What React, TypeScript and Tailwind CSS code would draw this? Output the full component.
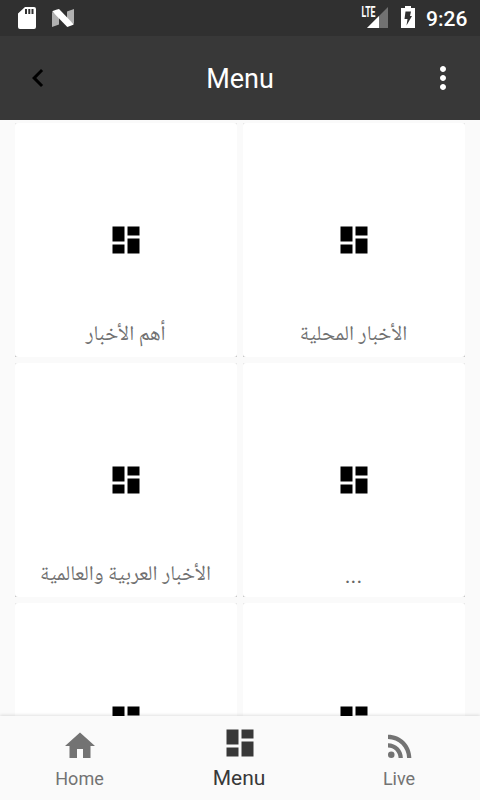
import React from "react";

const DASHBOARD = "M3 13h8V3H3v10zm0 8h8v-6H3v6zm10 0h8V11h-8v10zm0-18v6h8V3h-8z";

function Icon({ d, className }: { d: string; className?: string }) {
  return (
    <svg viewBox="0 0 24 24" width="36" height="36" fill="currentColor" className={`block shrink-0 ${className ?? ""}`}>
      <path d={d} />
    </svg>
  );
}

function StatusBar() {
  return (
    <div className="flex h-9 shrink-0 items-start bg-[#303030] text-white">
      <svg width="90" height="36" viewBox="0 0 90 36" className="block">
        <path
          fillRule="evenodd"
          fill="#fff"
          d="M25 7h9a2 2 0 0 1 2 2v18a2 2 0 0 1-2 2H20a2 2 0 0 1-2-2V13.500zM25 9v5h2V9zm3.300 0v5h2V9zm3.200 0v5h2V9z"
        />
        <path d="M52 12l7 4v8.500L52 27zM67 11.500L74 9v15l-7-4.500z" fill="#b0b0b0" />
        <path d="M52.300 11.500Q52.500 10.800 59 9L73.700 24.300Q73.500 25 67.300 27z" fill="#fff" />
      </svg>
      <div className="grow" />
      <svg width="70" height="36" viewBox="355 0 70 36" className="block">
        <path d="M388 7v21h-21z" fill="#727272" />
        <path d="M379 16v12h-12z" fill="#fff" />
        <path d="M360 5h17v10.500l-2 2h-15z" fill="#303030" />
        <text
          x="361.500"
          y="17"
          fill="#fff"
          fontFamily="Roboto, sans-serif"
          fontWeight="700"
          fontSize="14"
          textLength="14"
          lengthAdjust="spacingAndGlyphs"
        >
          LTE
        </text>
        <path d="M405 6h6v2h4v20h-14V8h4z" fill="#fff" />
        <path d="M405.500 11.500h5.500l-1 4.500h2l-5.500 9.500 1-6.500h-3z" fill="#303030" />
      </svg>
      <span className="mr-3 ml-px w-[42px] pt-[6px] text-[21px] leading-[26px] font-medium whitespace-nowrap">9:26</span>
    </div>
  );
}

function Toolbar() {
  return (
    <header className="flex h-[84px] shrink-0 items-center bg-[#383838] pr-[19px] pl-5 text-white">
      <Icon d="M15.410 7.410L14 6l-6 6 6 6 1.410-1.410L10.830 12z" className="text-black" />
      <h1 className="grow pt-[2px] pr-px text-center text-[27px] leading-8 font-normal">Menu</h1>
      <Icon d="M12 8c1.100 0 2-.9 2-2s-.9-2-2-2-2 .9-2 2 .9 2 2 2zm0 2c-1.100 0-2 .9-2 2s.9 2 2 2 2-.9 2-2-.9-2-2-2zm0 6c-1.100 0-2 .9-2 2s.9 2 2 2 2-.9 2-2-.9-2-2-2z" />
    </header>
  );
}

function Card({ label }: { label: string }) {
  return (
    <div className="h-[234px] bg-linear-to-b from-[#e6e6e6] to-[#c4c4c4]">
      <div className="flex h-full flex-col items-center rounded-[3px] bg-white pt-[99px]">
        <Icon d={DASHBOARD} className="text-black" />
        {label === "..." ? (
          <span className="mt-[58px] pr-px text-[22px] leading-10 text-[#666]">{label}</span>
        ) : (
          <span
            dir="rtl"
            className="mt-[58px] pr-px font-['Noto_Naskh_Arabic','DejaVu_Sans',monospace] text-[21px] leading-10 whitespace-nowrap text-[#707070]"
          >
            {label}
          </span>
        )}
      </div>
    </div>
  );
}

export default function App() {
  return (
    <div className="flex h-[800px] w-[480px] flex-col overflow-hidden bg-[#fafafa] font-[Roboto,sans-serif]">
      <StatusBar />
      <Toolbar />
      <main className="h-[596px] shrink-0 overflow-hidden px-[15px] pt-[3px]">
        <div className="grid grid-cols-2 gap-1.5">
          <Card label="أهم الأخبار" />
          <Card label="الأخبار المحلية" />
          <Card label="الأخبار العربية والعالمية" />
          <Card label="..." />
          <Card label="" />
          <Card label="" />
        </div>
      </main>
      <nav className="z-10 grid h-[84px] shrink-0 grid-cols-3 bg-[#fafafa] text-[#737373] shadow-[0_-1px_3px_rgba(0,0,0,0.12)]">
        <div className="flex flex-col items-center pt-3">
          <Icon d="M10 20v-6h4v6h5v-8h3L12 3 2 12h3v8z" />
          <span className="mt-1 pr-px text-[18px] leading-[22px]">Home</span>
        </div>
        <div className="flex flex-col items-center pt-[9px] text-[#383838]">
          <Icon d={DASHBOARD} />
          <span className="mt-1 pr-0.5 text-[21px] leading-[26px]">Menu</span>
        </div>
        <div className="flex flex-col items-center pt-3">
          <Icon d="M4 17.820a2.180 2.180 0 1 0 4.360 0a2.180 2.180 0 1 0-4.360 0zM4 4.440v2.830c7.030 0 12.730 5.700 12.730 12.730h2.830c0-8.590-6.970-15.560-15.560-15.560zm0 5.660v2.830c3.900 0 7.070 3.170 7.070 7.070h2.830c0-5.470-4.430-9.900-9.900-9.900z" />
          <span className="mt-1 pr-0.5 text-[18px] leading-[22px]">Live</span>
        </div>
      </nav>
    </div>
  );
}
